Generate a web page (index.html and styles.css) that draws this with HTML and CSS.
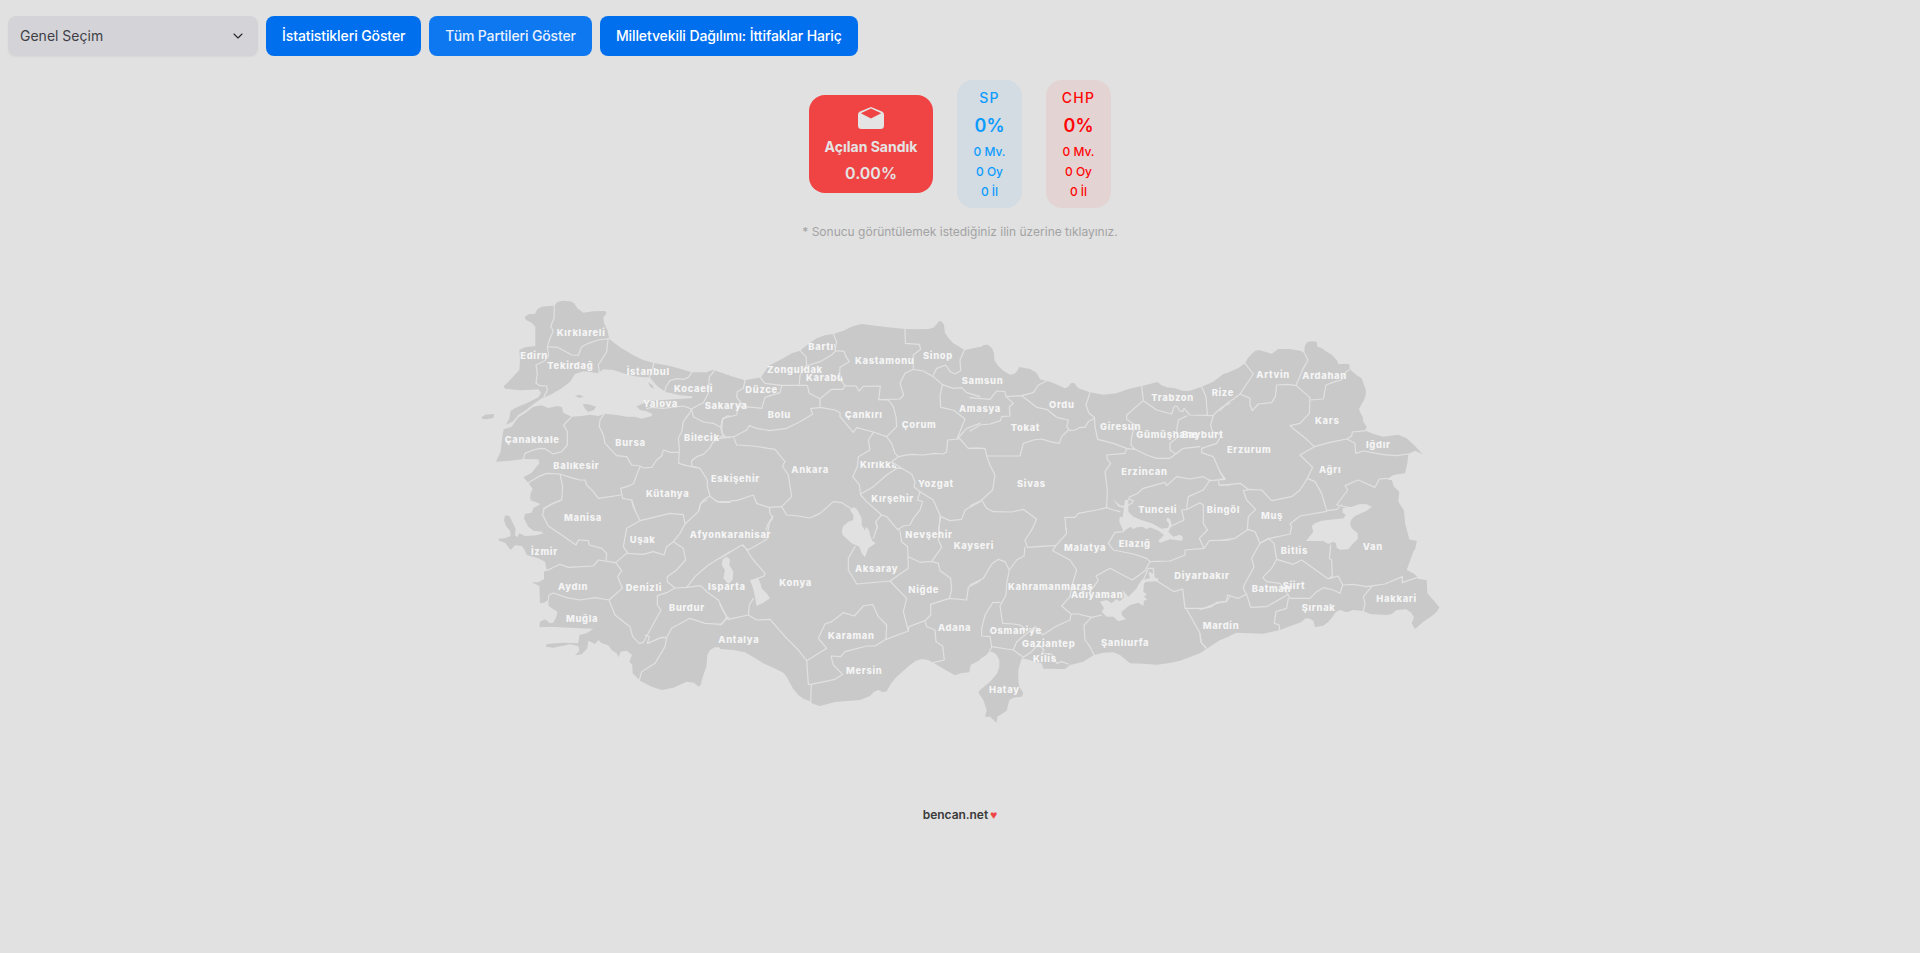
FILE: index.html
```html
<!DOCTYPE html>
<html lang="tr">
<head>
<meta charset="utf-8">
<title>Genel Seçim</title>
<link rel="stylesheet" href="styles.css">
</head>
<body>
<header class="toolbar">
  <button class="select"><span>Genel Seçim</span>
    <svg class="chevron" viewBox="0 0 24 24"><path d="m6 9 6 6 6-6"/></svg>
  </button>
  <button class="btn">İstatistikleri Göster</button>
  <button class="btn btn-hover">Tüm Partileri Göster</button>
  <button class="btn">Milletvekili Dağılımı: İttifaklar Hariç</button>
</header>
<main>
  <section class="results">
    <div class="opened">
      <svg class="envelope" viewBox="0 0 26 22"><path fill-rule="evenodd" d="M13 0 2 4.6Q0 5.500 0 7.500V18.500Q0 22 3.500 22H22.500Q26 22 26 18.500V7.500Q26 5.500 24 4.600ZM13 1.600 23.200 6.300 13 11.600 2.800 6.300Z"/></svg>
      <span class="opened-label">Açılan Sandık</span>
      <span class="opened-value">0.00%</span>
    </div>
    <div class="party party-sp"><span class="party-name">SP</span><span class="party-rate">0%</span><span>0 Mv.</span><span>0 Oy</span><span>0 İl</span></div>
    <div class="party party-chp"><span class="party-name">CHP</span><span class="party-rate">0%</span><span>0 Mv.</span><span>0 Oy</span><span>0 İl</span></div>
  </section>
  <p class="hint">* Sonucu görüntülemek istediğiniz ilin üzerine tıklayınız.</p>
  <svg class="map" viewBox="470 290 980 440">
    <defs>
      <clipPath id="c-edirne"><path d="M140 170H234V220H140z"/></clipPath>
      <clipPath id="c-bartin"><path d="M255 80H350L340 130H255z"/></clipPath>
      <clipPath id="c-karabuk"><path d="M250 180H352L370 208V220H250z"/></clipPath>
      <clipPath id="c-kirikkale"><path d="M410 440H515L518 458 532 474V480H410z"/></clipPath>
      <clipPath id="c-osmaniye"><path d="M50 370H230L213 402 195 380 175 390 163 400 155 410H50z M180 395 195 382 213 402V415H180z"/></clipPath>
    </defs>
    <g class="land">
      <g class="t-a">
        <path d="M164 80 178 72 195 72 202 58 215 50 235 48 253 47 262 36 280 32 300 34 312 39 322 55 340 68 370 64 405 63 410 70 400 82 402 100 412 120 418 147 450 172 490 196 520 210 550 219 544 240 538 262 520 262 490 258 460 250 430 240 400 238 383 250 365 247 340 244 315 252 300 275 275 295 240 315 215 325 190 343 165 362 145 375 128 395 108 404 118 385 122 362 140 352 170 340 205 322 213 308 205 298 185 299 150 301 105 296 101 289 115 275 148 240 150 210 148 180 165 172 196 168 196 110 185 98 168 90z"/>
        <path d="M552 219 600 228 630 236 665 247 710 247 727 240 733 241 780 257V660H190L190 655 212 642 195 632 180 628 182 610 188 597 175 578 160 562 185 548 208 520 205 508 160 507 120 512 78 515 92 485 97 440 101 418 125 410 135 395 145 382 165 370 190 350 215 346 235 354 262 348 276 352 280 368 305 380 335 378 360 374 385 378 405 371 440 375 470 380 495 380 515 386 545 378 547 372 530 364 510 360 499 349 515 343 530 335 545 332 580 330 610 328 665 325 668 319 630 316 605 310 584 306 565 292 545 275 538 262z"/>
        <path d="M35 382 45 374 73 372 70 384 50 388 36 386zM315 318 328 314 342 320 328 324zM338 342 355 343 378 350 372 360 355 366 345 356z"/>
      </g>
      <path class="t-b" d="M0 190 40 200 75 211 115 203 122 204 145 168 190 145 215 130 240 122 265 102 290 85 315 76 340 72 370 62 400 48 425 42 490 50 555 57 600 58 625 57 640 53 650 43 658 32 667 37 672 45 675 68 685 84 700 100 718 110 733 121 780 110V660H0z"/>
      <path class="t-c" d="M0 120 30 112 42 105 54 104 66 115 72 130 73 150 85 168 100 182 120 194 132 192 140 185 148 171 180 177 196 186 203 194 210 208 240 215 262 224 285 235 295 230 302 220 312 218 325 235 360 247 400 254 440 250 475 237 515 228 540 222 562 216 575 226 590 232 615 235 640 243 660 242 695 230 730 215 760 192 780 187V660H0z"/>
      <path class="t-d" d="M0 140 30 125 55 114 75 100 84 84 95 72 104 64 115 60 138 66 155 71 175 57 210 57 240 62 253 68 254 50 260 38 270 34 290 35 292 50 305 54 320 65 335 74 345 85 352 93 355 103 375 101 388 103 389 116 395 123 410 136 425 145 431 162 438 180 437 196 432 210 423 225 417 238 421 248 428 260 430 275 440 290 436 299 440 303 460 312 490 320 535 314 560 325 585 348 608 373 585 362 565 372 562 400 555 430 520 435 502 447 512 452 520 470 535 490 533 515 550 540 555 590 568 630 590 632 585 660H0z"/>
      <path class="t-e" d="M180 0 212 12 207 20 190 25 185 38 165 42 162 55 175 80 190 92 215 95 220 100 200 106 165 108 148 100 142 112 135 105 137 86 128 68 120 50 112 46 105 48 102 60 108 78 120 92 122 108 105 115 85 116 88 122 105 128 122 150 135 136 155 138 164 150 170 165 205 175 225 185 230 210 222 215 222 238 205 247 185 247 208 258 210 310 222 308 235 300 236 318 262 335 260 348 250 368 240 370 225 358 210 365 208 382 240 380 300 383 370 386 350 400 328 405 325 430 280 428 230 432 228 440 250 443 300 433 325 438 328 452 315 466 335 463 352 445 355 422 375 432 385 420 395 430 415 436 425 450 440 460 446 472 452 455 470 452 486 465 478 485 487 495 488 520 510 542 545 560 575 570 610 563 650 545 672 548 686 560 692 555 700 525 709 500 712 465 720 450 735 441 780 447V0z"/>
      <path class="t-f" d="M0 447 40 450 75 457 100 471 130 490 160 503 190 518 201 532 210 550 220 567 235 585 250 596 268 603 280 612 300 618 345 606 420 600 450 588 462 575 475 570 488 576 500 574 512 552 530 530 570 495 588 482 605 477 625 480 640 488 670 506 705 526 725 519 748 517 752 495 780 480V0H0z"/>
      <path class="t-g" d="M0 490 25 480 45 468 58 455 70 457 80 465 88 480 88 500 82 520 60 545 30 570 25 578 40 600 50 630 45 650 60 650 80 668 82 650 110 632 118 600 130 593 155 590 160 580 148 560 145 545 145 510 155 475 170 478 215 490 220 506 285 507 300 495 340 485 372 465 400 458 430 457 450 465 480 490 520 491 560 494 595 490 630 482 690 460 710 446 750 420 780 408V0H0z"/>
      <path class="t-h" d="M0 0H575L582 20 598 35 595 65 612 92 615 130 628 178 650 185 640 215 620 270 640 280 652 290 655 297 680 300 682 340 700 360 718 382 712 393 700 405 670 425 645 447 635 430 642 412 634 398 618 388 590 390 575 402 560 405 510 402 490 393 460 390 440 397 420 390 408 395 398 410 385 425 370 437 345 441 340 422 330 416 318 415 302 427 280 435 240 450 190 461 110 458 60 480 20 502 0 513z"/>
    </g>
    <g class="water">
      <path class="t-f" d="M400 22 408 25 415 35 425 55 425 75 435 92 437 80 447 90 450 105 457 122 467 130 445 145 435 172 425 160 418 140 395 130 368 105 365 93 370 78 385 65 400 60 400 45 390 30zM90 240 115 235 122 252 125 265 140 280 150 295 130 308 110 318 105 290 98 260zM5 195 8 178 20 170 30 178 28 195 40 215 38 240 25 252 10 235 15 210z"/>
      <path class="t-g" d="M428 -3 450 16 462 18 465 0 475 0 475 35 490 50 520 62 545 70 575 86 595 83 597 72 589 60 592 53 600 56 605 75 595 95 610 110 630 104 639 112 636 122 600 118 570 128 565 122 582 105 565 92 540 82 530 88 518 80 500 82 490 88 482 80 470 88 460 95 455 80 448 65 449 50 458 52 462 24 446 20zM390 305 410 300 425 310 438 298 450 304 462 292 458 270 475 290 500 265 505 255 515 240 540 235 535 215 552 222 555 233 566 236 562 244 530 245 522 250 520 275 530 283 522 290 532 298 522 302 520 318 505 308 480 315 455 335 455 345 468 358 445 364 430 350 410 350 395 335 402 325z"/>
      <path class="t-h" d="M318 183 340 155 335 138 345 130 365 122 430 115 438 105 428 98 428 85 455 80 480 72 500 73 516 80 500 92 465 108 455 118 450 130 455 145 473 160 473 178 460 190 445 208 420 209 410 203 408 190 400 185 385 192 370 183z"/>
    </g>
    <path class="t-a land" d="M534 276 548 286 552 297 540 290z"/>
    <g class="borders">
      <path class="t-a" d="M253 47 252 85 242 110 250 122 238 150 232 170 262 172 285 184 305 195 325 196 335 170 355 160 385 150 418 146M232 172 236 195 225 212 198 225 202 250 198 280 210 287 230 288 232 300 222 320M414 148 410 185 385 225 388 248M552 219 546 240 538 262 560 290 584 306M665 248 655 262 640 268 620 266 600 272 588 290 584 306M733 243 718 260 715 310 700 338 680 348 665 357M530 356 545 352 580 355 640 348 665 357 658 370 640 395 635 425 625 445 628 475 626 520 650 527 690 535M665 357 670 380 700 396 730 400 752 412 757 390 770 378 780 378M752 412 757 430 768 443 780 443M768 443 745 446 730 455 718 475 700 493 680 500 665 512 665 528 690 535 712 570 712 590 720 618 740 635 780 636M720 618 700 630 690 645 688 660M626 487 600 487 580 480 575 498 560 510 545 532 520 534 510 528 485 525 470 500 440 497 405 460 400 435 388 410 390 390 403 371M510 530 500 555 490 582 470 590 452 595 458 625 485 630 495 660M452 615 385 625 370 605 350 585 345 570 330 570 300 562 270 552 230 550 205 560 175 578M270 552 278 590 275 630 245 642 220 658M160 507 165 490 185 482 210 475 225 476 250 492 275 485 292 465 292 425 281 405 305 380"/>
      <path class="t-b" d="M75 211 70 235 52 245 50 262 65 280 60 290 100 292 125 295 135 262 180 248 185 228M122 204 135 220 185 226 262 226 268 250 300 266M240 122 258 140 260 165 240 195 238 222M258 168 300 155 335 135 348 122M340 72 350 95 345 122 372 124 378 140 388 155 360 172 358 205 375 227M555 57 556 100 598 103 602 118 580 135 580 178M300 266 335 238 368 238 375 227 408 228 417 243 430 229 481 228 476 269 540 267 551 255 540 220 555 190 580 178 610 183 640 200 667 224M640 195 650 175 677 165 690 185 705 192 722 182 720 150 733 121M667 224 700 235 725 233 740 248 780 260M667 224 660 260 662 292 700 300 735 327 712 385 720 387M712 387 740 355 780 340M712 387 683 390 680 425 670 432 645 430 610 435 570 433 535 440M720 387 745 415 780 414M300 266 300 292 345 300 360 308 360 320 400 367 410 353 460 366 500 380 530 350 528 320 520 290 505 270 476 269M500 380 515 400 525 430 535 440 515 455 545 475 575 492 585 515 582 530 600 545 640 570 662 620 690 632 725 628 735 600 780 575M460 368 445 390 450 420 415 440 412 470 398 500 418 525 422 555 440 575 485 615 500 620 525 650 535 660M422 552 460 530 500 495 530 475 545 475M600 545 592 570 608 575 600 600 580 625 570 645 550 648 535 658M485 615 467 635 472 655M662 622 655 660M300 292 272 296 278 312 240 335 200 355 150 362 110 355 88 347 80 360 42 380 10 382 5 360 8 325 50 315 55 290M42 385 50 405 100 408 165 418 195 455 187 468 205 495 215 560 185 590 145 592 110 580 100 555 50 572 35 572 25 577 0 575M0 380 12 382M185 590 200 615 235 618 270 624 300 610 340 575 365 578 400 600M148 592 150 610 158 625 145 640 138 660"/>
      <path class="t-c" d="M0 263 60 268 80 243 105 245 108 260 155 257 190 248 205 225 230 213M108 260 130 280 118 290 120 318 95 320 92 332 60 342 30 345 0 363M155 257 200 292 230 298 260 322 295 330 290 350 300 362 315 360 330 352 345 352 355 335 373 325M360 247 348 285 357 310 373 322 375 350 383 388 430 400 470 415 495 418M0 415 45 415 50 438 150 438 160 400 190 390 215 387 240 395 268 400 275 380 295 360M50 438 60 465 75 495 68 540 35 570 0 588M35 570 50 595 70 605 125 606 160 598 200 628 185 660M515 228 520 272 470 315 470 328 495 345 485 380 483 405 495 418 530 435 560 445 600 445 617 432M520 272 560 300 605 312 612 290 620 288 630 303 638 305 642 295 660 315 727 317M695 230 708 260 712 315M780 280 755 292 730 315 722 345 727 365 755 375 740 400 695 415 695 428 730 440 750 485 765 508M650 318 625 330 620 360 625 380 600 400 600 420 617 432 640 415 690 410M470 415 465 430 410 435 412 448 422 460 405 485 412 540 410 593 380 600 325 610 315 622 285 622 288 660M410 593 430 600 450 605M468 590 485 580 490 572 475 567 480 560 500 552 520 535 585 517 590 527 620 500 660 507 700 500 720 512 765 508M720 510 700 540 655 560 650 590 652 598 635 600 642 630 610 645 600 650M652 598 690 578 700 585 700 640 712 660M745 512 748 525 780 525"/>
      <path class="t-d" d="M75 100 100 132 60 192 40 208 20 220 0 242M60 192 90 205 90 225 97 242 115 222 155 218 166 200 170 165 200 163 228 166M253 68 264 90 250 115 228 166 270 203 268 250 240 280 210 287 225 300 260 328 283 350 330 337 380 327 395 318 397 306 440 302M270 210 310 207 318 165 345 155 365 150 378 125 388 120M380 327 405 340 407 370 430 363 490 374 530 377 565 372M283 350 240 375 278 412 262 445 240 480 215 500 155 512 125 480 90 478 70 482 80 510 107 538 85 560 82 598 105 605 120 640M262 445 285 455 305 490 320 542 350 538 365 525M400 535 350 525 383 480 375 467 415 450 465 472 478 447 502 445M0 466 60 460 85 478M0 632 45 625 85 598M120 640 150 625 210 612 215 590 210 582 240 558 320 544M0 425 5 435 15 445 0 448"/>
      <path class="t-e" d="M275 0 250 10 222 25 218 45 235 78 275 105 318 135 325 120 355 122 358 135 395 145 410 160 408 180M228 212 245 205 270 193 295 202 370 198 385 180 437 188 472 158 460 140 470 85 510 62 490 20 485 0M510 62 560 50 600 40 640 44 645 72 630 100 610 125 590 140 582 165 550 155 520 163 472 160M610 125 640 145 647 180 620 210 592 230 592 245 615 264 650 262M437 188 455 212 443 230 457 265 417 300 375 293 330 300 290 293 250 279 237 285 235 300M417 300 435 345 480 380 488 410 508 430 520 427 573 330 562 315 562 287 590 278 615 264M525 405 538 410 532 430 575 412 590 413 605 385 660 355 705 370 755 373 770 352 745 300 710 275 692 257 650 262 675 230 715 195 780 155M590 413 585 440 555 490 515 515 508 540M645 72 685 35 692 10 710 0M735 0 750 7 780 7"/>
      <path class="t-f" d="M0 175 65 135 85 150 140 118 145 85 150 62 160 48M70 135 100 180 135 220 132 228 95 242M100 295 88 315 85 345 25 358 0 315M0 375 25 352M85 345 110 360 150 358 200 415 235 450 260 482 265 553 274 553 272 605M260 482 320 445 295 415 315 372 335 365 370 338 403 348 430 318 458 313 475 350 500 375 498 418 465 438 440 438 375 455 362 470 333 468 340 495 368 523 345 538 274 553M498 418 565 393 550 335 560 295 510 243 410 252 385 210 385 175 405 140M510 243 565 205 563 140 545 125 540 92M467 65 472 80 460 115M565 170 600 187 635 184 665 142 655 120 660 50M635 184 655 190 660 212 692 235 695 270 688 295 632 313 632 345 615 362 567 380 565 393M688 295 740 300 745 262 780 243M615 362 620 380 645 390 648 425 668 438 673 480 640 488"/>
      <path class="t-g" d="M185 90 165 120 172 142 258 136 248 152 300 180 320 210 305 260 300 290 275 318 303 342M288 85 290 100 258 136M165 142 162 168 140 180 118 210 105 185 85 178 65 192 40 235 0 255M118 210 110 250 108 285 90 318 98 370 130 372 150 375 170 390M90 307 68 308 45 345 35 385 35 408 60 410 65 440 130 450 160 472M130 450 140 425 165 405 195 380 218 405 260 378 300 360 303 342 325 342 365 352 395 345M365 352 342 375 345 420 360 440 372 465M65 440 58 455M160 472 185 455 205 432 222 450 215 460 245 462 260 490 275 485 295 492M460 95 435 97 415 130 430 150 490 162 530 175 540 185 600 183 645 165 645 150 702 145 718 122 780 120M712 90 688 115 702 145M540 185 525 212 487 240 420 205 378 228 385 240 370 262 335 270 305 262M520 240 535 205 550 205 552 225M555 240 580 255 612 275 638 267 645 325 700 325 740 310 770 303 780 290M650 328 690 400 692 425 708 445"/>
      <path class="t-h" d="M180 190 155 235 162 260 130 320 133 332 140 343 152 382 200 380 262 345M180 190 205 175 222 190 230 238 215 265 188 292 200 305 240 310 265 345 270 355 330 355 350 335 370 323 400 330 420 340 428 315M230 238 280 253 305 240 340 265 385 297 397 288 395 240 388 235 392 195M390 295 415 288 428 315 460 313 500 320 555 312 607 290 607 308 652 292M515 320 490 350 495 370 490 393M265 355 260 385 228 395 223 430 238 435 238 450M0 388 35 380 50 367 80 365 82 345 115 355 140 343M0 465 5 490 18 502"/>
    </g>
    <g class="labels">
      <g class="t-a"><text x="260" y="138">Kırklareli</text><text x="151" y="206" clip-path="url(#c-edirne)">Edirne</text><text x="232" y="237">Tekirdağ</text><text x="470" y="255">İstanbul</text><text x="612" y="306">Kocaeli</text><text x="519" y="351">Yalova</text><text x="704" y="357">Sakarya</text><text x="104" y="459">Çanakkale</text><text x="436" y="468">Bursa</text><text x="642" y="453">Bilecik</text><text x="250" y="536">Balıkesir</text><text x="528" y="621">Kütahya</text><text x="723" y="576">Eskişehir</text></g>
      <g class="t-b"><text x="265" y="120" clip-path="url(#c-bartin)">Bartın</text><text x="405" y="162">Kastamonu</text><text x="609" y="147">Sinop</text><text x="141" y="189">Zonguldak</text><text x="258" y="214" clip-path="url(#c-karabuk)">Karabük</text><text x="76" y="249">Düzce</text><text x="143" y="324">Bolu</text><text x="374" y="324">Çankırı</text><text x="545" y="354">Çorum</text><text x="214" y="489">Ankara</text><text x="420" y="474" clip-path="url(#c-kirikkale)">Kırıkkale</text><text x="454" y="576">Kırşehir</text><text x="594" y="531">Yozgat</text><text x="725" y="222">Samsun</text><text x="717" y="306">Amasya</text></g>
      <g class="t-c"><text x="122" y="363">Tokat</text><text x="237" y="294">Ordu</text><text x="390" y="361">Giresun</text><text x="544" y="273">Trabzon</text><text x="725" y="258">Rize</text><text x="499" y="384">Gümüşhane</text><text x="635" y="384">Bayburt</text><text x="454" y="495">Erzincan</text><text x="141" y="531">Sivas</text><text x="505" y="609">Tunceli</text></g>
      <g class="t-d"><text x="109" y="144">Artvin</text><text x="247" y="147">Ardahan</text><text x="285" y="282">Kars</text><text x="21" y="369">Erzurum</text><text x="438" y="354">Iğdır</text><text x="297" y="429">Ağrı</text><text x="123" y="567">Muş</text></g>
      <g class="t-e"><text x="282" y="63">Manisa</text><text x="479" y="129">Uşak</text><text x="183" y="165">İzmir</text><text x="264" y="270">Aydın</text><text x="467" y="273">Denizli</text><text x="597" y="333">Burdur</text><text x="288" y="366">Muğla</text><text x="659" y="114">Afyonkarahisar</text><text x="714" y="270">Isparta</text><text x="745" y="429">Antalya</text></g>
      <g class="t-f"><text x="178" y="258">Konya</text><text x="405" y="216">Aksaray</text><text x="556" y="114">Nevşehir</text><text x="565" y="279">Niğde</text><text x="324" y="417">Karaman</text><text x="654" y="393">Adana</text><text x="378" y="522">Mersin</text><text x="701" y="147">Kayseri</text></g>
      <g class="t-g"><text x="282" y="153">Malatya</text><text x="446" y="141">Elazığ</text><text x="114" y="270">Kahramanmaraş</text><text x="303" y="294">Adıyaman</text><text x="59" y="402" clip-path="url(#c-osmaniye)">Osmaniye</text><text x="156" y="441">Gaziantep</text><text x="393" y="438">Şanlıurfa</text><text x="189" y="486">Kilis</text><text x="57" y="579">Hatay</text><text x="613" y="237">Diyarbakır</text><text x="710" y="39">Bingöl</text></g>
      <g class="t-h"><text x="242" y="222">Bitlis</text><text x="248" y="327">Siirt</text><text x="155" y="336">Batman</text><text x="305" y="393">Şırnak</text><text x="529" y="366">Hakkari</text><text x="488" y="210">Van</text><text x="8" y="447">Mardin</text></g>
    </g>
  </svg>
</main>
<footer class="footer">bencan.net <span class="heart">♥</span></footer>
</body>
</html>
```
FILE: styles.css
```css
* { box-sizing: border-box; }
body { margin: 0; background: #e1e1e1; font-family: Inter, "Noto Sans", sans-serif; color: #3f3f46; overflow: hidden; }
button { font: inherit; border: 0; margin: 0; }
.toolbar { display: flex; gap: 8px; padding: 16px 8px 0; }
.select { display: flex; align-items: center; justify-content: space-between; width: 250px; height: 40px; padding: 0 12px 1px; border-radius: 8px; background: #d4d4d8; box-shadow: 0 1px 2px rgba(0, 0, 0, .05); font-size: 14px; color: #3f3f46; }
.chevron { width: 16px; height: 16px; fill: none; stroke: #27272a; stroke-width: 1.6; stroke-linecap: round; stroke-linejoin: round; }
.btn { height: 40px; padding: 0 16px 2px; border-radius: 8px; background: #006fee; color: #fff; font-size: 14px; font-weight: 500; letter-spacing: -.1px; white-space: nowrap; }
.btn-hover { background: #0e78f0; color: #e8f1fd; letter-spacing: -.13px; }
main { display: flex; flex-direction: column; align-items: center; }
.results { display: flex; align-items: center; gap: 24px; margin-top: 24px; }
.opened { display: flex; flex-direction: column; align-items: center; width: 124px; height: 98px; padding-top: 12px; border-radius: 16px; background: #f04444; color: #e4e4e4; }
.envelope { width: 26px; height: 22px; fill: #e4e4e4; }
.opened-label { margin-top: 8px; font-size: 14px; line-height: 20px; font-weight: 700; }
.opened-value { margin-top: 4px; font-size: 16px; line-height: 24px; font-weight: 600; }
.party { display: flex; flex-direction: column; align-items: center; width: 65px; height: 128px; padding-top: 8px; border-radius: 16px; font-size: 12px; line-height: 20px; font-weight: 450; }
.party-sp { background: #d3dbe3; color: #0c9cff; }
.party-chp { background: #e3d3d3; color: #ff0505; }
.party-name { font-size: 14px; letter-spacing: 1.3px; font-weight: 500; }
.party-rate { font-size: 18px; line-height: 28px; margin: 4px 0 2px; font-weight: 600; }
.hint { margin: 16px 0 0; font-size: 12px; line-height: 16px; color: #a3a3a3; }
.map { display: block; width: 980px; height: 440px; margin-top: 50px; }
.t-a { transform: translate(470px, 290px) scale(.33333); }
.t-b { transform: translate(720px, 310px) scale(.33333); }
.t-c { transform: translate(970px, 310px) scale(.33333); }
.t-d { transform: translate(1220px, 330px) scale(.33333); }
.t-e { transform: translate(470px, 500px) scale(.33333); }
.t-f { transform: translate(720px, 500px) scale(.33333); }
.t-g { transform: translate(970px, 500px) scale(.33333); }
.t-h { transform: translate(1200px, 480px) scale(.33333); }
.land { fill: #c9c9c9; }
.water { fill: #e1e1e1; }
.borders { fill: none; stroke: #e1e1e1; stroke-width: 3.6px; stroke-linejoin: round; stroke-linecap: round; }
.labels { fill: #f5f5f5; font-size: 28px; font-weight: 800; letter-spacing: 2.1px; }
.footer { margin-top: 77px; text-align: center; font-size: 12px; line-height: 16px; font-weight: 600; letter-spacing: -.05px; color: #3a3a3a; }
.heart { color: #ef4444; font: 12px/12px "Liberation Sans", sans-serif; margin-left: -1px; }
```
